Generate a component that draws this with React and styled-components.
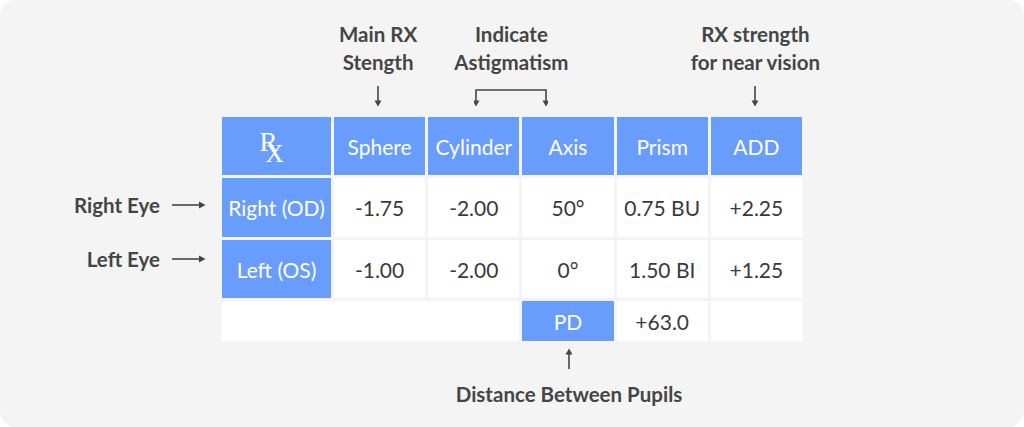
import React from 'react';
import styled, { createGlobalStyle } from 'styled-components';

const GlobalStyle = createGlobalStyle`
	html, body {
		margin: 0;
		padding: 0;
		background: #ffffff;
		font-family: Lato, "Open Sans", sans-serif;
	}
`;

const BLUE = '#689cfd';
const INK = '#454545';
const COLS = '109px repeat(5, minmax(0, 1fr))';

const Card = styled.div`
	width: 1024px;
	height: 427px;
	box-sizing: border-box;
	background: #f4f4f4;
	border-radius: 16px;
	display: grid;
	grid-template-columns: 222px 580px;
	grid-template-rows: 117px auto auto;
	align-content: start;
`;

const Notes = styled.div`
	grid-column: 2;
	display: grid;
	grid-template-columns: ${COLS};
	column-gap: 3px;
	align-items: ${p => (p.$bottom ? 'start' : 'end')};
	padding-bottom: ${p => (p.$bottom ? 0 : 10)}px;
	padding-top: ${p => (p.$bottom ? 7 : 0)}px;
`;

// $shift moves the centre of the note left (<0) or right (>0) of its columns
const Note = styled.div`
	grid-column: ${p => p.$col};
	display: flex;
	flex-direction: ${p => (p.$bottom ? 'column-reverse' : 'column')};
	align-items: center;
	justify-content: flex-end;
	gap: ${p => (p.$bottom ? 11 : 10)}px;
	margin-left: ${p => (p.$shift > 0 ? p.$shift * 2 : 0)}px;
	margin-right: ${p => (p.$shift < 0 ? -p.$shift * 2 : 0)}px;
	white-space: nowrap;
`;

const NoteText = styled.div`
	font-size: 20.5px;
	font-weight: 700;
	line-height: 28px;
	color: ${INK};
	text-align: center;
`;

const EyeLabels = styled.div`
	grid-column: 1;
	display: flex;
	flex-direction: column;
	gap: 26px;
	padding-top: 74px;
	padding-right: 16px;
`;

const EyeLabel = styled.div`
	display: flex;
	justify-content: flex-end;
	align-items: center;
	gap: 12px;
	font-size: 20.5px;
	font-weight: 700;
	line-height: 28px;
	color: ${INK};
`;

const Table = styled.div`
	grid-column: 2;
	display: grid;
	grid-template-columns: ${COLS};
	grid-template-rows: 58px 59px 58px 40px;
	gap: 3px;
`;

const Cell = styled.div`
	grid-column: ${p => (p.$span ? `span ${p.$span}` : 'auto')};
	display: flex;
	align-items: center;
	justify-content: center;
	background: ${p => (p.$blue ? BLUE : '#ffffff')};
	color: ${p => (p.$blue ? '#ffffff' : '#3a3a3a')};
	font-size: 21px;
	white-space: nowrap;
`;

const RxMark = styled.div`
	font-family: "Liberation Serif", "DejaVu Serif", serif;
	color: #ffffff;
	font-size: 27px;
	line-height: 1;
	display: flex;
	margin-top: -8px;
	margin-left: -10px;

	.x {
		position: relative;
		top: 12px;
		margin-left: -12px;
		font-size: 25px;
	}
`;

const DownArrow = () => (
	<svg width="10" height="21" viewBox="0 0 10 21">
		<line x1="5" y1="0" x2="5" y2="17" stroke={INK} strokeWidth="1.6" />
		<path d="M1.5 14.5 L5 20.5 L8.5 14.5 Z" fill={INK} />
	</svg>
);

const UpArrow = () => (
	<svg width="10" height="21" viewBox="0 0 10 21">
		<line x1="5" y1="4" x2="5" y2="21" stroke={INK} strokeWidth="1.6" />
		<path d="M1.5 6.5 L5 0.5 L8.5 6.5 Z" fill={INK} />
	</svg>
);

const Bracket = () => (
	<svg width="74" height="21" viewBox="0 0 74 21">
		<path d="M2 18 V4 H72 V18" fill="none" stroke={INK} strokeWidth="1.6" />
		<path d="M-1.5 14.5 L2 20.5 L5.5 14.5 Z" fill={INK} />
		<path d="M68.5 14.5 L72 20.5 L75.5 14.5 Z" fill={INK} />
	</svg>
);

const RightArrow = () => (
	<svg width="34" height="10" viewBox="0 0 34 10">
		<line x1="0" y1="5" x2="30" y2="5" stroke={INK} strokeWidth="1.6" />
		<path d="M27 1.5 L33.5 5 L27 8.5 Z" fill={INK} />
	</svg>
);

export default function App() {
	return (
		<>
			<GlobalStyle />
			<Card>
				<Notes>
					<Note $col="2" $shift={-1.5}>
						<NoteText>Main RX<br />Stength</NoteText>
						<DownArrow />
					</Note>
					<Note $col="3 / 5" $shift={-9.5}>
						<NoteText>Indicate<br />Astigmatism</NoteText>
						<Bracket />
					</Note>
					<Note $col="6" $shift={-1}>
						<NoteText>RX strength<br />for near vision</NoteText>
						<DownArrow />
					</Note>
				</Notes>

				<EyeLabels>
					<EyeLabel>Right Eye <RightArrow /></EyeLabel>
					<EyeLabel>Left Eye <RightArrow /></EyeLabel>
				</EyeLabels>

				<Table>
					<Cell $blue>
						<RxMark><span>R</span><span className="x">X</span></RxMark>
					</Cell>
					<Cell $blue>Sphere</Cell>
					<Cell $blue>Cylinder</Cell>
					<Cell $blue>Axis</Cell>
					<Cell $blue>Prism</Cell>
					<Cell $blue>ADD</Cell>

					<Cell $blue>Right (OD)</Cell>
					<Cell>-1.75</Cell>
					<Cell>-2.00</Cell>
					<Cell>50°</Cell>
					<Cell>0.75 BU</Cell>
					<Cell>+2.25</Cell>

					<Cell $blue>Left (OS)</Cell>
					<Cell>-1.00</Cell>
					<Cell>-2.00</Cell>
					<Cell>0°</Cell>
					<Cell>1.50 BI</Cell>
					<Cell>+1.25</Cell>

					<Cell $span={3} />
					<Cell $blue>PD</Cell>
					<Cell>+63.0</Cell>
					<Cell />
				</Table>

				<Notes $bottom>
					<Note $col="4" $bottom $shift={1}>
						<NoteText>Distance Between Pupils</NoteText>
						<UpArrow />
					</Note>
				</Notes>
			</Card>
		</>
	);
}
